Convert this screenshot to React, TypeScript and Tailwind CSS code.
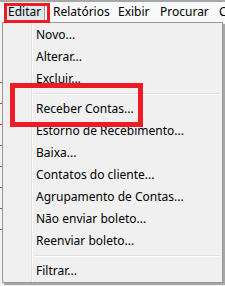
import React from "react";

type Entry = { label: string } | { sep: true };

const ITEMS: Entry[] = [
  { label: "Novo..." },
  { label: "Alterar..." },
  { label: "Excluir..." },
  { sep: true },
  { label: "Receber Contas..." },
  { label: "Estorno de Recebimento..." },
  { label: "Baixa..." },
  { label: "Contatos do cliente..." },
  { label: "Agrupamento de Contas..." },
  { label: "Não enviar boleto..." },
  { label: "Reenviar boleto..." },
  { sep: true },
  { label: "Filtrar..." },
];

const FONT = { fontFamily: '"Segoe UI", "Noto Sans", "Liberation Sans", Arial, sans-serif' };

function MenuBar() {
  return (
    <div className="flex h-[22px] items-center border-t-2 border-[#a7a7a7] bg-[#f7f8f9] text-[12px] text-black">
      <div className="ml-[7px] flex h-[17px] w-[38px] shrink-0 items-center border-r border-[#8d9aa8] bg-[#e3e8ee] pl-[1px]">
        Editar
      </div>
      <span className="ml-[8px] w-[65px] shrink-0">Relatórios</span>
      <span className="w-[42px] shrink-0">Exibir</span>
      <span className="w-[59px] shrink-0">Procurar</span>
      <span className="shrink-0">C</span>
    </div>
  );
}

function Dropdown() {
  return (
    <div className="absolute left-[2px] top-[22px] h-[261px] w-[221px] border border-[#979797] bg-[#f0f0f0] shadow-[2px_2px_1px_rgba(0,0,0,0.35)]">
      <div className="absolute bottom-0 left-[28px] top-0 w-px bg-[#e2e3e3]" />
      <div className="absolute bottom-0 left-[29px] top-0 w-px bg-white" />
      <div className="relative flex flex-col pt-px text-[12px] text-black">
        {ITEMS.map((item, i) =>
          "sep" in item ? (
            <div key={i} className="flex h-[8px] items-center pl-[31px] pr-[2px]">
              <div className="h-[2px] w-full border-t border-[#e0e0e0] bg-white" />
            </div>
          ) : (
            <div key={i} className="flex h-[22px] items-center pl-[33px]">
              {item.label}
            </div>
          )
        )}
      </div>
    </div>
  );
}

export default function App() {
  return (
    <div className="relative h-[286px] w-[225px] overflow-hidden bg-white" style={FONT}>
      <MenuBar />
      <div className="flex h-[264px]">
        <div className="flex w-[2px] flex-col gap-[20px] bg-[#f4f4f4] pt-[60px]">
          {[0, 1, 2, 3, 4, 5, 6, 7].map((n) => (
            <div key={n} className="h-px w-[2px] bg-[#e03030]" />
          ))}
        </div>
      </div>
      <Dropdown />
      <div className="pointer-events-none absolute left-[4px] top-[3px] h-[20px] w-[46px] border-[3px] border-[#ed1c24]" />
      <div className="pointer-events-none absolute left-[10px] top-[83px] h-[44px] w-[133px] border-[5px] border-[#ed1c24]" />
    </div>
  );
}
